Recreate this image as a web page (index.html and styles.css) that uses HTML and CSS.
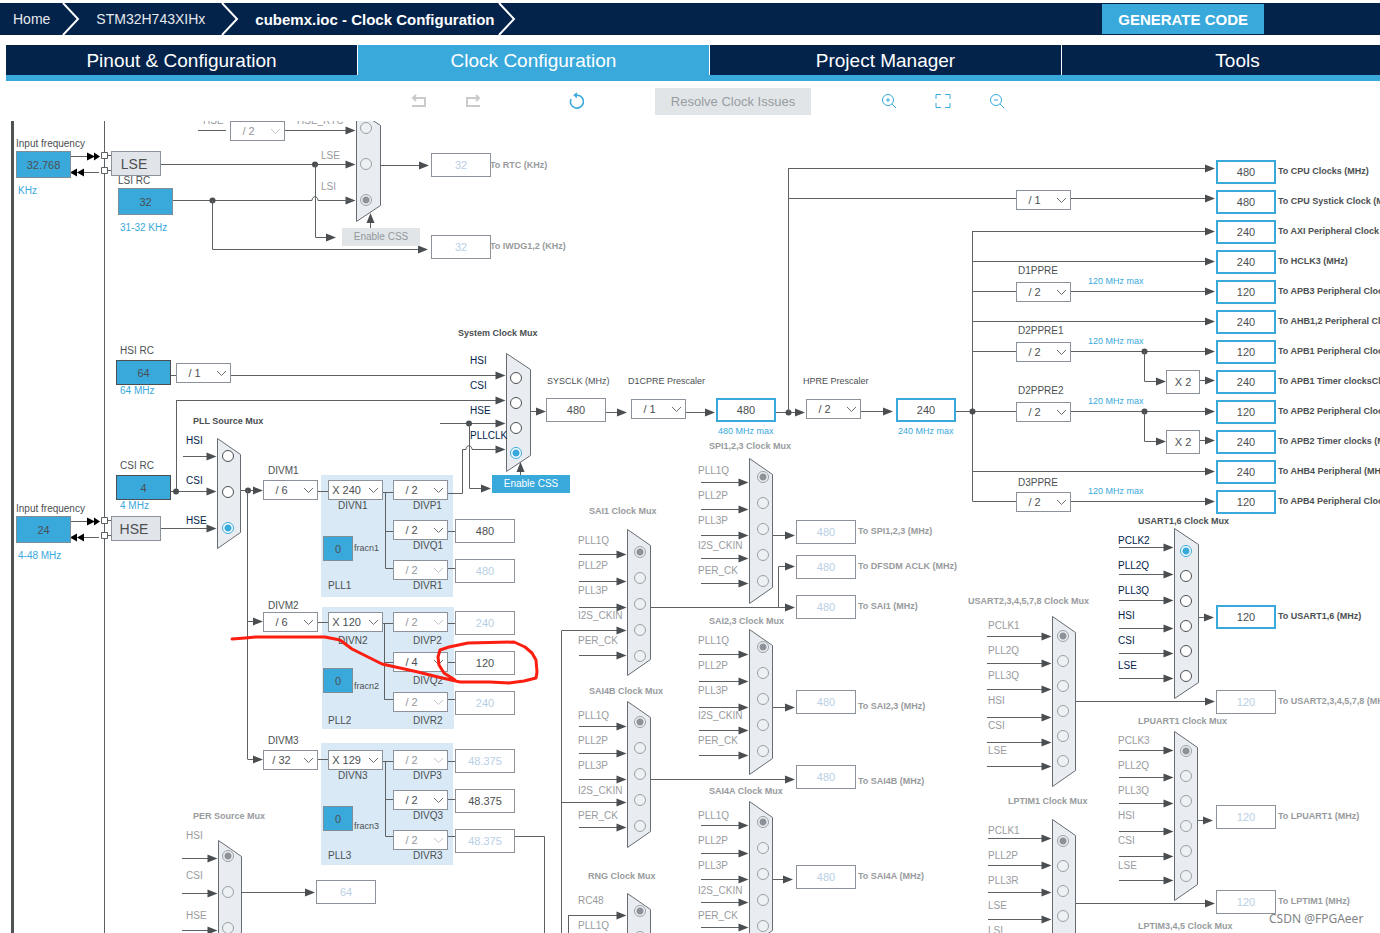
FILE: index.html
```html
<!DOCTYPE html>
<html lang="en">
<head>
<meta charset="utf-8">
<title>cubemx.ioc - Clock Configuration</title>
<link rel="stylesheet" href="styles.css">
</head>
<body>
<header class="topbar">
  <nav class="crumbs" aria-label="Breadcrumb">
    <a class="crumb" href="#home">Home</a>
    <svg class="crumb-sep" viewBox="0 0 18 32"><path d="M1 0L16 16L1 32"/></svg>
    <a class="crumb crumb-chip" href="#chip">STM32H743XIHx</a>
    <svg class="crumb-sep" viewBox="0 0 18 32"><path d="M1 0L16 16L1 32"/></svg>
    <a class="crumb crumb-current" href="#clock">cubemx.ioc - Clock Configuration</a>
    <svg class="crumb-sep" viewBox="0 0 18 32"><path d="M1 0L16 16L1 32"/></svg>
  </nav>
  <button class="generate" type="button">GENERATE CODE</button>
</header>
<div class="workspace">
  <nav class="tabs" aria-label="Sections">
    <a class="tab" href="#pinout">Pinout &amp; Configuration</a>
    <a class="tab tab-active" href="#clock">Clock Configuration</a>
    <a class="tab" href="#project">Project Manager</a>
    <a class="tab" href="#tools">Tools</a>
  </nav>
  <div class="toolbar">
    <div class="tool-group">
      <button class="tool tool-off" type="button" aria-label="Undo"><svg viewBox="0 0 16 16"><path d="M1 13H14V5H3M5 2L2 5L5 8"/></svg></button>
      <button class="tool tool-off" type="button" aria-label="Redo"><svg viewBox="0 0 16 16"><path d="M15 13H2V5H13M11 2L14 5L11 8"/></svg></button>
    </div>
    <button class="tool tool-reset" type="button" aria-label="Reset"><svg viewBox="0 0 16 16"><path stroke-width="1.600" d="M2 6A6.500 6.500 0 1 0 9 2.200H6M8 0L5.500 2.200L8 4.500"/></svg></button>
    <button class="resolve" type="button" disabled>Resolve Clock Issues</button>
    <div class="tool-group">
      <button class="tool" type="button" aria-label="Zoom in"><svg viewBox="0 0 16 16"><circle cx="7" cy="7" r="5.500"/><path d="M11 11L15 15M5 7H9M7 5V9"/></svg></button>
      <button class="tool" type="button" aria-label="Fit"><svg viewBox="0 0 16 16"><path d="M1 6V1.500H6M10 1.500H15V6M15 10V14.500H10M6 14.500H1V10"/></svg></button>
      <button class="tool" type="button" aria-label="Zoom out"><svg viewBox="0 0 16 16"><circle cx="7" cy="7" r="5.500"/><path d="M11 11L15 15M5 7H9"/></svg></button>
    </div>
  </div>
</div>
<main class="canvas" id="canvas"></main>
<script src="app.js"></script>
</body>
</html>
```
FILE: styles.css
```css
* { box-sizing: border-box; }
body {
  margin: 0;
  height: 100vh;
  display: flex;
  flex-direction: column;
  overflow: hidden;
  background: #fff;
  font-family: "Liberation Sans", Arial, sans-serif;
  color: #4b4f52;
}
button, input, select { font: inherit; margin: 0; }
a { color: inherit; text-decoration: none; }

.topbar {
  display: flex;
  align-items: center;
  justify-content: space-between;
  height: 32px;
  margin-top: 3px;
  padding: 0 116px 0 13px;
  background: #03234b;
  flex: none;
}
.crumbs { display: flex; align-items: center; color: #fff; font-size: 14px; }
.crumb { white-space: nowrap; color: #e6e9ed; }
.crumb-chip { margin-left: 16px; }
.crumb-current { margin-left: 16px; color: #fff; font-size: 15px; font-weight: bold; }
.crumb-sep { width: 18px; height: 32px; fill: none; stroke: #fff; stroke-width: 2; margin-left: 12px; }
.crumb-chip + .crumb-sep { margin-left: 16px; }
.crumb-current + .crumb-sep { margin-left: 4px; }
.generate {
  height: 30px;
  padding: 0 16px;
  border: 0;
  background: #39a9dc;
  color: #fff;
  font-size: 15px;
  font-weight: bold;
}

.workspace { margin: 10px -33px 0 6px; flex: none; }
.tabs { display: flex; gap: 1px; border-bottom: 6px solid #39a9dc; }
.tab {
  flex: 1 1 0;
  height: 30px;
  line-height: 31px;
  text-align: center;
  background: #03234b;
  color: #fff;
  font-size: 19px;
}
.tab-active { background: #39a9dc; }
.toolbar { display: flex; justify-content: center; align-items: center; gap: 70px; height: 40px; padding-right: 3px; }
.tool-group { display: flex; gap: 38px; }
.tool { width: 16px; height: 16px; padding: 0; border: 0; background: none; color: #39a9dc; }
.tool svg { display: block; width: 16px; height: 16px; fill: none; stroke: currentColor; stroke-width: 1; overflow: visible; }
.tool-off { color: #c8cacc; }
.tool-off svg { stroke-width: 2; }
.tool-reset { margin-left: 18px; }
.resolve {
  height: 27px;
  padding: 0 16px;
  border: 0;
  background: #e1e5e8;
  color: #979ca0;
  font-size: 13px;
}

.canvas { position: relative; flex: 1; overflow: hidden; font-size: 10px; line-height: 12px; }
.wires { position: absolute; left: 0; top: 0; width: 100%; height: 100%; fill: none; stroke: #5d6163; stroke-width: 1; }
.wires .fill { fill: #4b4e50; stroke: none; }
.wires .black { fill: #000; stroke: none; }
.wires .frame { stroke: #4f5353; stroke-width: 3; }
.wires .mux { fill: #e9edf1; stroke: #666c72; }
.wires .pin { fill: #fff; }
.pen { position: absolute; left: 0; top: 0; width: 100%; height: 100%; fill: none; stroke: #fc1e10; stroke-width: 3; stroke-linecap: round; stroke-linejoin: round; pointer-events: none; }

.node { position: absolute; }
.text { white-space: nowrap; }
.text-navy { color: #03234b; }
.text-muted { color: #989b9e; }
.text-blue { color: #39a9dc; }
.text-bold { font-size: 9px; font-weight: bold; }
.text-small { font-size: 9px; }

.pll { width: 132px; height: 122px; background: #d9e9f6; }
.value {
  width: 60px;
  height: 24px;
  padding: 0;
  border: 1px solid #8b9299;
  border-radius: 0;
  background: #fff;
  color: #4b4f52;
  font-size: 11px;
  text-align: center;
}
.value-off { color: #b9cfe6; }
.value-out { border: 2px solid #39a9dc; }
.value-mult { width: 34px; }
.value-in { width: 55px; height: 27px; background: #39a9dc; border-color: #7f8d97; }
.value-rc { width: 55px; height: 25px; background: #39a9dc; border-color: #4b4f52; }
.value-frac { width: 30px; height: 25px; background: #39a9dc; border-color: #7f8d97; }
.osc { width: 50px; height: 25px; padding: 0 4px 0 0; border: 1px solid #8b9299; background: #e1e5e9; color: #4b4f52; font-size: 14px; text-align: center; }
.css-button { width: 78px; height: 18px; padding: 0; border: 0; background: #39a9dc; color: #fff; font-size: 10px; }
.css-button:disabled { background: #e1e5e8; color: #92989d; }

.picker { width: 55px; height: 20px; }
.picker select {
  appearance: none;
  display: block;
  width: 100%;
  height: 100%;
  padding: 0 18px 0 0;
  border: 1px solid #8b9299;
  border-radius: 0;
  background: #fff;
  color: #4b4f52;
  font-size: 11px;
  text-align: center;
  text-align-last: center;
  opacity: 1;
}
.picker svg { position: absolute; right: 4px; top: 7px; width: 11px; height: 7px; fill: none; stroke: #6b7073; pointer-events: none; }
.picker-off select { color: #92979b; }
.picker-off svg { stroke: #c3c6c9; }

.radio {
  appearance: none;
  width: 12px;
  height: 12px;
  border: 1px solid #4b4f52;
  border-radius: 50%;
  background: #fff;
}
.radio:checked { border-color: #39a9dc; background: radial-gradient(circle, #39a9dc 0 3px, #fff 4px); }
.radio:disabled { border-color: #9aa0a5; background: #eef1f4; }
.radio:disabled:checked { background: radial-gradient(circle, #8b9299 0 3px, #eef1f4 4px); }
.watermark { font-family: "Noto Sans", sans-serif; font-size: 12px; line-height: 18px; color: #808386; white-space: nowrap; }
```
FILE: app.js
```js
// Vertical scroll of the clock tree inside the canvas.
const SCROLL = 121;
const canvas = document.getElementById('canvas');
const NS = 'http://www.w3.org/2000/svg';

function add(tag, cls, x, y, text) {
  const el = document.createElement(tag);
  el.className = 'node ' + cls;
  el.style.left = x + 'px';
  el.style.top = (y - SCROLL) + 'px';
  if (text) el.textContent = text;
  canvas.append(el);
  return el;
}

function layer(cls) {
  const svg = document.createElementNS(NS, 'svg');
  svg.setAttribute('class', cls);
  const g = document.createElementNS(NS, 'g');
  g.setAttribute('transform', `translate(0 ${-SCROLL})`);
  svg.append(g);
  canvas.append(svg);
  return g;
}

function draw(g, d, cls) {
  const p = document.createElementNS(NS, 'path');
  p.setAttribute('d', d);
  if (cls) p.setAttribute('class', cls);
  g.append(p);
}

// PLL blocks lie below the wires.
const plls = [
  { n: 1, x: 321, y: 475, row: 480, lab: 506, frac: 536, fracLab: 548, mult: 'X 240', div: ['/ 2', '/ 2', '/ 2'], off: [0, 0, 1], out: ['', '480', '480'] },
  { n: 2, x: 322, y: 607, row: 612, lab: 641, frac: 668, fracLab: 686, mult: 'X 120', div: ['/ 2', '/ 4', '/ 2'], off: [1, 0, 1], out: ['240', '120', '240'] },
  { n: 3, x: 321, y: 743, row: 750, lab: 776, frac: 806, fracLab: 826, mult: 'X 129', div: ['/ 2', '/ 2', '/ 2'], off: [1, 0, 1], out: ['48.375', '48.375', '48.375'] }
];
plls.forEach(p => add('div', 'pll', p.x, p.y));

const wires = layer('wires');
const wire = d => draw(wires, d);
const dot = (x, y) => draw(wires, `M${x - 3} ${y}a3 3 0 1 0 6 0a3 3 0 1 0 -6 0`, 'fill');
const head = (x, y) => draw(wires, `M${x} ${y}l-10 -4v8z`, 'fill');
const headUp = (x, y) => draw(wires, `M${x} ${y}l-4 10h8z`, 'fill');
function arrow(x1, x2, y) { wire(`M${x1} ${y}H${x2 - 4}`); head(x2, y); }

draw(wires, 'M12.5 121V2000', 'frame');
wire('M104.5 121V2000');

// Oscillator pins with their double arrows.
[156.5, 521.5].forEach(y => {
  wire(`M71 ${y}H95M84 ${y + 16}H99M108 ${y - 1}H111M108 ${y + 14}H111`);
  draw(wires, `M87 ${y - 4}l8 4l-8 4zM94 ${y - 4}l6 4l-6 4zM77 ${y + 12}l-7 4l7 4zM84 ${y + 12}l-7 4l7 4z`, 'black');
  draw(wires, `M101.5 ${y - 4}h6v6h-6zM101.5 ${y + 11}h6v6h-6z`, 'pin');
});

// Multiplexers: outline, title, and inputs with their label and wire heights.
const PQ = ['PLL1Q', 'PLL2P', 'PLL3P', 'I2S_CKIN', 'PER_CK'];
const US = ['PCLK1', 'PLL2Q', 'PLL3Q', 'HSI', 'CSI', 'LSE'];
const muxes = [
  { id: 'rtc', x: 356.5, r: 380.5, top: 109.5, bottom: 221.5, cx: 366, first: 128, step: 36, sel: 2, lx: 321, labels: ['', 'LSE', 'LSI'], ly: [121, 156, 187], wy: [130.5, 164.5, 200.5], from: [285, 161, 0], off: 1 },
  { id: 'sys', title: 'System Clock Mux', tx: 458, ty: 333, x: 506.5, r: 530.5, top: 353.5, bottom: 471.5, cx: 516, first: 378, step: 25, sel: 3, lx: 470, labels: ['HSI', 'CSI', 'HSE', 'PLLCLK'], ly: [361, 386, 411, 436], wy: [375.5, 400.5, 423.5, 449.5], from: [231, 176, 440, 0] },
  { id: 'pll', title: 'PLL Source Mux', tx: 193, ty: 421, x: 217.5, r: 240.5, top: 438.5, bottom: 548.5, cx: 228, first: 456, step: 36, sel: 2, lx: 186, labels: ['HSI', 'CSI', 'HSE'], ly: [441, 481, 521], wy: [456.5, 491.5, 528.5], from: [183, 171, 161] },
  { id: 'per', title: 'PER Source Mux', tx: 193, ty: 816, x: 218.5, r: 241.5, top: 840.5, bottom: 948.5, cx: 228, first: 856, step: 36, sel: 0, lx: 186, labels: ['HSI', 'CSI', 'HSE'], ly: [836, 876, 916], wy: [858.5, 893.5, 930.5], from: [182, 182, 182], off: 1 },
  { id: 'spi', title: 'SPI1,2,3 Clock Mux', tx: 709, ty: 446, x: 749.5, r: 772.5, top: 458.5, bottom: 603.5, cx: 763, first: 477, step: 26, sel: 0, lx: 698, labels: PQ, l0: 471, wy: [482.5, 509.5, 535.5, 558.5, 583.5], f: 701, off: 1 },
  { id: 'sai1', title: 'SAI1 Clock Mux', tx: 589, ty: 511, x: 627.5, r: 650.5, top: 529.5, bottom: 675.5, cx: 640, first: 552, step: 26, sel: 0, lx: 578, labels: PQ, l0: 541, wy: [554.5, 581.5, 607.5, 630.5, 655.5], from: [579, 579, 579, 562, 579], off: 1 },
  { id: 'sai23', title: 'SAI2,3 Clock Mux', tx: 709, ty: 621, x: 749.5, r: 772.5, top: 629.5, bottom: 774.5, cx: 763, first: 647, step: 26, sel: 0, lx: 698, labels: PQ, l0: 641, wy: [654.5, 681.5, 707.5, 730.5, 755.5], f: 699, off: 1 },
  { id: 'sai4b', title: 'SAI4B Clock Mux', tx: 589, ty: 691, x: 627.5, r: 650.5, top: 701.5, bottom: 847.5, cx: 640, first: 722, step: 26, sel: 0, lx: 578, labels: PQ, l0: 716, wy: [726.5, 753.5, 779.5, 802.5, 827.5], from: [579, 579, 579, 562, 579], off: 1 },
  { id: 'sai4a', title: 'SAI4A Clock Mux', tx: 709, ty: 791, x: 749.5, r: 772.5, top: 801.5, bottom: 946.5, cx: 763, first: 822, step: 26, sel: 0, lx: 698, labels: PQ, l0: 816, wy: [825.5, 853.5, 879.5, 902.5, 927.5], f: 701, off: 1 },
  { id: 'rng', title: 'RNG Clock Mux', tx: 588, ty: 876, x: 627.5, r: 650.5, top: 893.5, bottom: 1010.5, cx: 640, first: 911, step: 26, sel: 0, lx: 578, labels: ['RC48', 'PLL1Q'], l0: 901, wy: [915.5, 941.5], f: 568, off: 1 },
  { id: 'us16', title: 'USART1,6 Clock Mux', tx: 1138, ty: 521, x: 1174.5, r: 1198.5, top: 528.5, bottom: 698.5, cx: 1186, first: 551, step: 25, sel: 0, lx: 1118, labels: ['PCLK2', ...US.slice(1)], l0: 541, wy: [547.5, 574.5, 600.5, 628.5, 653.5, 678.5], f: 1119 },
  { id: 'us2', title: 'USART2,3,4,5,7,8 Clock Mux', tx: 968, ty: 601, x: 1052.5, r: 1075.5, top: 616.5, bottom: 786.5, cx: 1063, first: 636, step: 25, sel: 0, lx: 988, labels: US, l0: 626, wy: [636.5, 663.5, 689.5, 717.5, 742.5, 766.5], f: 987, off: 1 },
  { id: 'lpu', title: 'LPUART1 Clock Mux', tx: 1138, ty: 721, x: 1174.5, r: 1197.5, top: 731.5, bottom: 900.5, cx: 1186, first: 751, step: 25, sel: 0, lx: 1118, labels: ['PCLK3', ...US.slice(1)], l0: 741, wy: [750.5, 777.5, 803.5, 831.5, 856.5, 880.5], f: 1119, off: 1 },
  { id: 'lpt', title: 'LPTIM1 Clock Mux', tx: 1008, ty: 801, x: 1052.5, r: 1075.5, top: 819.5, bottom: 990.5, cx: 1063, first: 841, step: 25, sel: 0, lx: 988, labels: ['PCLK1', 'PLL2P', 'PLL3R', 'LSE', 'LSI'], l0: 831, wy: [838.5, 865.5, 892.5, 919.5, 944.5], f: 988, off: 1 }
];
muxes.forEach(m => {
  draw(wires, `M${m.x} ${m.top}L${m.r} ${m.top + 16}V${m.bottom - 16}L${m.x} ${m.bottom}Z`, 'mux');
  m.wy.forEach((y, i) => {
    const from = m.from ? m.from[i] : m.f;
    if (from) arrow(from, m.x - 1, y); else head(m.x - 1, y);
  });
});

// Low-speed branch.
wire('M198 130.5H226M173 200.5H312C312 195.500 318 195.500 318 200.500H352');
dot(315, 164.5); dot(212.5, 200.5);
wire('M315.5 164V237.5H328'); head(336, 237.5);
wire('M212.5 200V249.5H420'); head(428, 249.5);
arrow(380, 429, 165.5);
wire('M370.5 228V218'); headUp(370.5, 213);
// HSI, CSI and PLL source.
wire('M171 375.500H176M176.500 491V400.500');
dot(176, 491.5);
arrow(241, 263, 490.5); dot(248, 490.5);
wire('M247.5 490V759.5'); arrow(248, 263, 621.5); arrow(248, 263, 759.5);
wire('M318 491.5H328M318 622.5H328M318 759.5H328');
// PLL trees.
wire('M383 492.5H393M385.5 492V568.5H393M385 531.5H393M448 531.5H455M448 568.5H455');
wire('M383 623.5H393M384.5 623V699.5H393M384 662.5H393M448 623.5H455M448 662.5H455M448 699.5H455');
wire('M383 761.5H393M385.5 761V836.5H393M385 799.5H393M448 761.5H455M448 799.5H455M448 836.5H455M515 836.5H544.5V2000');
wire('M448 493.5H462.5V449.5H466C466 444.500 472 444.500 472 449.500H500');
dot(469, 423.5); wire('M469.5 424V488.5H482'); head(491, 488.5);
wire('M520.5 475V466'); headUp(520.5, 462);
arrow(241, 315, 892.5);
// System clock chain.
arrow(530, 546, 411.5); arrow(606, 627, 412.5); arrow(686, 715, 412.5);
arrow(776, 805, 412.5); dot(788.5, 412.5); arrow(861, 893, 411.5);
wire('M956 411.5H1016M788.5 412V168.5M788 198.5H1016M972.5 231V501.5H1016M972 291.5H1016M972 351.5H1016');
dot(972.5, 411.5);
arrow(788, 1215, 168.5);
[231.5, 261.5, 321.5, 471.5].forEach(y => arrow(972, 1215, y));
[198.5, 291.5, 351.5, 411.5, 501.5].forEach(y => arrow(1071, 1215, y));
[351.5, 411.5].forEach(y => {
  dot(1144.5, y); wire(`M1144.5 ${y}v30h12`); head(1166, y + 30); arrow(1200, 1215, y + 29);
});
// Peripheral outputs.
arrow(773, 795, 535.5); arrow(651, 795, 607.5); wire('M778.5 607V566.5H790'); head(795, 566.5);
arrow(773, 795, 707.5); arrow(651, 795, 779.5); arrow(773, 793, 879.5);
wire('M561.5 2000V630.5M568.5 915V2000');
arrow(1199, 1214, 617.5); arrow(1076, 1215, 701.5); arrow(1198, 1213, 820.5); arrow(1076, 1215, 903.5);

function text(x, y, str, cls = '') { return add('span', 'text ' + cls, x, y - 6, str); }

muxes.forEach(m => {
  if (m.title) text(m.tx, m.ty, m.title, 'text-bold ' + (m.off ? 'text-muted' : ''));
  m.labels.forEach((name, i) => {
    const id = m.id + i;
    if (name) {
      const y = m.ly ? m.ly[i] : m.l0 + 25 * i;
      add('label', 'text ' + (m.off ? 'text-muted' : 'text-navy'), m.lx, y - 6, name).htmlFor = id;
    }
    const r = add('input', 'radio', m.cx - 6, m.first + m.step * i - 6);
    r.type = 'radio'; r.name = m.id; r.id = id;
    r.checked = i === m.sel; r.disabled = !!m.off;
    if (!name) r.setAttribute('aria-label', 'HSE_RTC');
  });
});

[[203, 121, 'HSE', 'text-muted'], [297, 121, 'HSE_RTC', 'text-muted'], [16, 144, 'Input frequency'], [16, 509, 'Input frequency'],
 [118, 181, 'LSI RC'], [120, 351, 'HSI RC'], [120, 466, 'CSI RC'],
 [268, 471, 'DIVM1'], [268, 606, 'DIVM2'], [268, 741, 'DIVM3'],
 [547, 381, 'SYSCLK (MHz)', 'text-small'], [628, 381, 'D1CPRE Prescaler', 'text-small'], [803, 381, 'HPRE Prescaler', 'text-small'],
 [1018, 271, 'D1PPRE'], [1018, 331, 'D2PPRE1'], [1018, 391, 'D2PPRE2'], [1018, 483, 'D3PPRE']
].forEach(a => text(...a));
[[18, 191, 'KHz'], [120, 228, '31-32 KHz'], [120, 391, '64 MHz'], [120, 506, '4 MHz'], [18, 556, '4-48 MHz']
].forEach(a => text(...a, 'text-blue'));
[[718, 431, '480 MHz max'], [898, 431, '240 MHz max'],
 [1088, 281, '120 MHz max'], [1088, 341, '120 MHz max'], [1088, 401, '120 MHz max'], [1088, 491, '120 MHz max']
].forEach(a => text(...a, 'text-blue text-small'));
text(1138, 926, 'LPTIM3,4,5 Clock Mux', 'text-bold text-muted');

function value(x, y, v, cls = '', name = 'Frequency') {
  const el = add('input', 'value ' + cls, x, y);
  el.type = 'text'; el.value = v; el.readOnly = true;
  el.setAttribute('aria-label', name);
}
function picker(x, y, v, off, name = 'Divider') {
  const box = add('span', 'picker' + (off ? ' picker-off' : ''), x, y);
  box.innerHTML = `<select aria-label="${name}"${off ? ' disabled' : ''}><option>${v}</option></select><svg viewBox="0 0 11 7"><path d="M1 1L5.500 5.500L10 1"/></svg>`;
}

value(16, 151, '32.768', 'value-in', 'LSE input'); value(16, 516, '24', 'value-in', 'HSE input');
value(118, 188, '32', 'value-in', 'LSI RC');
value(116, 360, '64', 'value-rc', 'HSI RC'); value(116, 475, '4', 'value-rc', 'CSI RC');
add('button', 'osc', 111, 151, 'LSE'); add('button', 'osc', 111, 516, 'HSE');
add('button', 'css-button', 342, 228, 'Enable CSS').disabled = true;
add('button', 'css-button', 492, 475, 'Enable CSS');

[[230, 121, '/ 2', 1], [176, 363, '/ 1'], [263, 480, '/ 6'], [263, 612, '/ 6'], [263, 750, '/ 32'],
 [631, 399, '/ 1'], [806, 399, '/ 2'], [1016, 190, '/ 1'], [1016, 282, '/ 2'], [1016, 342, '/ 2'],
 [1016, 402, '/ 2'], [1016, 492, '/ 2']].forEach(a => picker(...a));

plls.forEach(p => {
  picker(328, p.row, p.mult, 0, 'DIVN' + p.n);
  text(338, p.lab, 'DIVN' + p.n);
  value(323, p.frac, '0', 'value-frac', 'fracn' + p.n);
  text(354, p.fracLab, 'fracn' + p.n, 'text-small');
  text(328, p.lab + 80, 'PLL' + p.n);
  ['P', 'Q', 'R'].forEach((c, i) => {
    picker(393, p.row + 40 * i, p.div[i], p.off[i], `DIV${c}${p.n}`);
    text(413, p.lab + 40 * i, `DIV${c}${p.n}`);
    if (p.out[i]) value(455, p.row - 1 + 40 * i, p.out[i], p.off[i] ? 'value-off' : '');
  });
});

value(546, 398, '480'); value(716, 398, '480', 'value-out'); value(896, 398, '240', 'value-out');
value(316, 880, '64', 'value-off');
value(1166, 370, 'X 2', 'value-mult', 'Multiplier'); value(1166, 430, 'X 2', 'value-mult', 'Multiplier');

[['480', 'CPU Clocks (MHz)'], ['480', 'CPU Systick Clock (MHz)'], ['240', 'AXI Peripheral Clock (MHz)'],
 ['240', 'HCLK3 (MHz)'], ['120', 'APB3 Peripheral Clocks (MHz)'], ['240', 'AHB1,2 Peripheral Clocks (MHz)'],
 ['120', 'APB1 Peripheral Clocks (MHz)'], ['240', 'APB1 Timer clocksClocks (MHz)'], ['120', 'APB2 Peripheral Clocks (MHz)'],
 ['240', 'APB2 Timer clocks (MHz)'], ['240', 'AHB4 Peripheral (MHz)'], ['120', 'APB4 Peripheral Clocks (MHz)']
].forEach(([v, s], i) => {
  value(1216, 160 + 30 * i, v, 'value-out', s);
  text(1278, 171 + 30 * i, 'To ' + s, 'text-bold');
});
value(1216, 605, '120', 'value-out', 'USART1,6'); text(1278, 616, 'To USART1,6 (MHz)', 'text-bold');

[[431, 153, '32', 490, 165, 'RTC (KHz)'], [431, 235, '32', 490, 246, 'IWDG1,2 (KHz)'],
 [796, 520, '480', 858, 531, 'SPI1,2,3 (MHz)'], [796, 555, '480', 858, 566, 'DFSDM ACLK (MHz)'],
 [796, 595, '480', 858, 606, 'SAI1 (MHz)'], [796, 690, '480', 858, 706, 'SAI2,3 (MHz)'],
 [796, 765, '480', 858, 781, 'SAI4B (MHz)'], [796, 865, '480', 858, 876, 'SAI4A (MHz)'],
 [1216, 690, '120', 1278, 701, 'USART2,3,4,5,7,8 (MHz)'], [1216, 805, '120', 1278, 816, 'LPUART1 (MHz)'],
 [1216, 890, '120', 1278, 901, 'LPTIM1 (MHz)']
].forEach(([x, y, v, tx, ty, s]) => {
  value(x, y, v, 'value-off', s);
  text(tx, ty, 'To ' + s, 'text-bold text-muted');
});

// Freehand annotation.
const pen = layer('pen');
draw(pen, 'M232 639L245 638L256 637H325L340 640L352 649L366 656L382 664L400 668L418 672L438 677L460 682L490 682L509 683L524 681L536 678L537 672L536 660L532 653L525 647L514 642L468 643L449 647L440 650L438 657L439 665L444 673L455 680');

add('span', 'watermark', 1269, 910, 'CSDN @FPGAeer');
```
